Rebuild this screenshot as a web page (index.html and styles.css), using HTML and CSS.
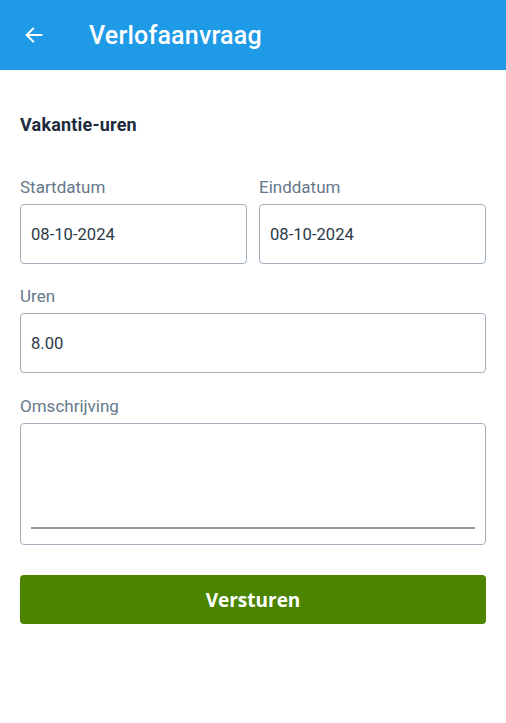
FILE: index.html
```html
<!DOCTYPE html>
<html lang="nl">
<head>
<meta charset="utf-8">
<title>Verlofaanvraag</title>
<link rel="stylesheet" href="styles.css">
</head>
<body>
<header class="appbar">
  <svg class="back" width="22" height="22" viewBox="0 0 24 24" aria-hidden="true">
    <path d="M20 12H4.5M11 5l-7 7 7 7" fill="none" stroke="#fff" stroke-width="2.2" stroke-linecap="square"/>
  </svg>
  <h1 class="title">Verlofaanvraag</h1>
</header>
<main class="content">
  <h2 class="section">Vakantie-uren</h2>
  <div class="row">
    <div class="field">
      <label class="label">Startdatum</label>
      <div class="input">08-10-2024</div>
    </div>
    <div class="field">
      <label class="label">Einddatum</label>
      <div class="input">08-10-2024</div>
    </div>
  </div>
  <div class="field">
    <label class="label">Uren</label>
    <div class="input">8.00</div>
  </div>
  <div class="field field-wide">
    <label class="label">Omschrijving</label>
    <div class="textarea"><div class="underline"></div></div>
  </div>
  <button class="submit">Versturen</button>
</main>
</body>
</html>
```
FILE: styles.css
```css
* { box-sizing: border-box; }
html, body { margin: 0; padding: 0; background: #fff; }
body { font-family: Roboto, "Noto Sans", sans-serif; }
.appbar {
  height: 70px;
  background: #1e9ae6;
  display: flex;
  align-items: center;
  padding-left: 23px;
}
.back { display: block; margin-top: -1px; }
.title {
  margin: 0 0 0 44px;
  color: #fff;
  font-size: 25px;
  font-weight: 500;
  letter-spacing: 0.2px;
}
.content {
  padding: 0 20px;
  display: flex;
  flex-direction: column;
}
.section {
  margin: 44px 0 0;
  font-size: 18px;
  font-weight: 700;
  color: #1d2b3c;
  line-height: 22px;
  letter-spacing: 0.2px;
}
.row {
  display: grid;
  grid-template-columns: 1fr 1fr;
  column-gap: 12px;
  margin-top: 41px;
}
.row .field { margin-top: 0; }
.field { display: flex; flex-direction: column; margin-top: 22px; }
.field-wide { margin-top: 23px; }
.label {
  font-size: 17px;
  color: #66788a;
  line-height: 20px;
  margin-bottom: 7px;
}
.input {
  height: 60px;
  border: 1.5px solid #a3b0bc;
  border-radius: 4px;
  display: flex;
  align-items: center;
  padding-left: 10px;
  font-size: 16.6px;
  color: #2c3a48;
}
.textarea {
  height: 122px;
  border: 1.5px solid #a3b0bc;
  border-radius: 4px;
  display: flex;
  flex-direction: column;
  justify-content: flex-end;
  padding: 0 10px 15px;
}
.underline { height: 2px; background: #999; }
.submit {
  margin-top: 30px;
  height: 49px;
  border: 0;
  border-radius: 4px;
  background: #4b8500;
  color: #fff;
  font-family: "Open Sans", sans-serif;
  font-weight: 700;
  font-size: 19px;
}
```
